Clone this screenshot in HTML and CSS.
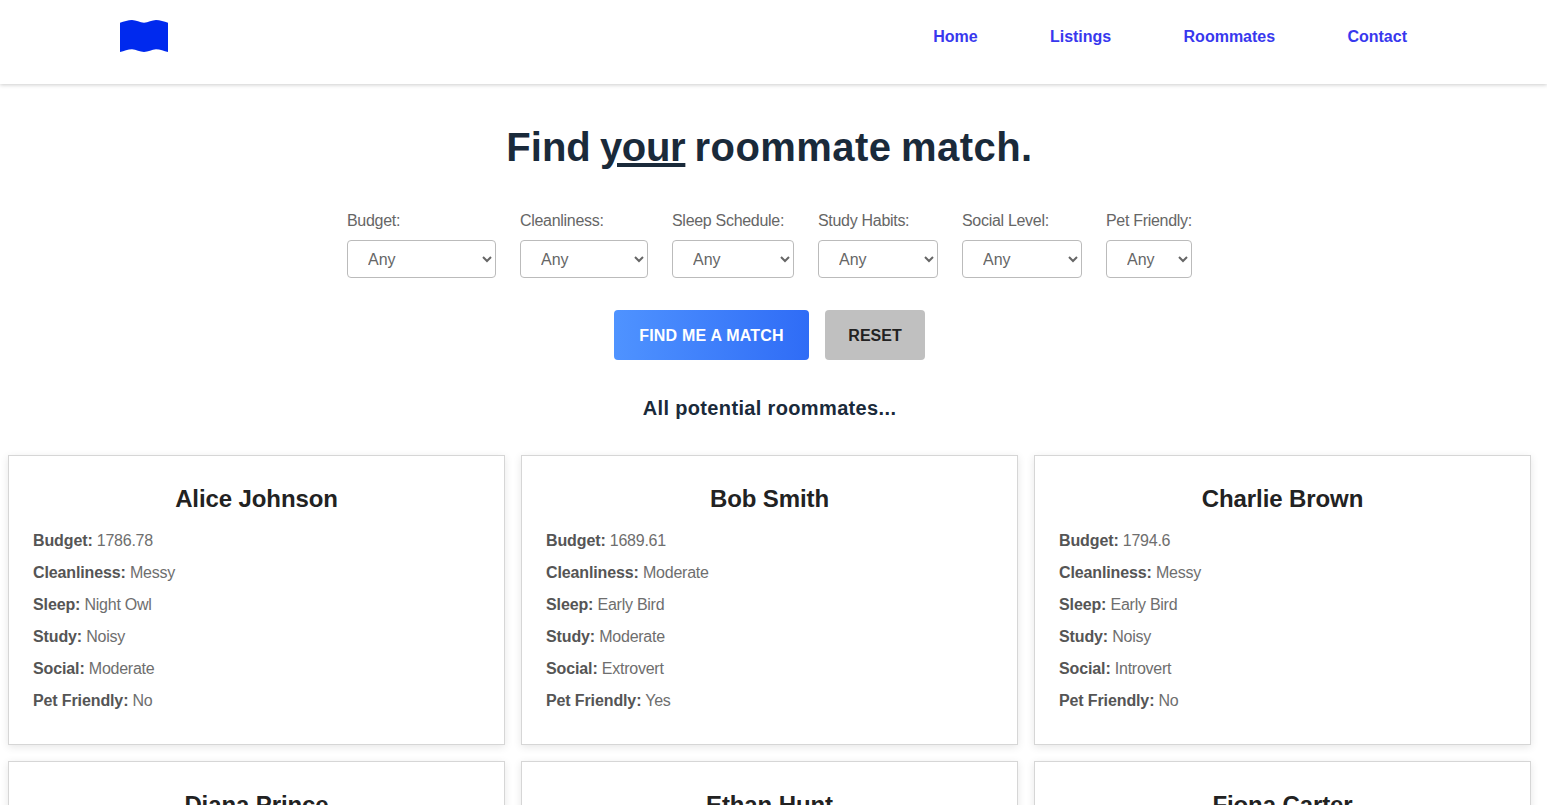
FILE: index.html
```html
<!DOCTYPE html>
<html lang="en">

<head>
    <meta charset="UTF-8">
    <meta name="viewport" content="width=device-width, initial-scale=1.0">
    <title>Find your roommate match</title>
    <link rel="stylesheet" href="styles.css">
</head>

<body>
    <header class="site-header">
        <a class="logo" href="#">
            <svg width="48" height="32" viewBox="0 0 48 32">
                <path fill="#0029ee" d="M0 2.7C4 1.6 8 0 12 0s8 2.700 12 2.700S32 0 36 0s8 1.600 12 2.700V32c-4-1-8-2.800-12-2.800S28 32 24 32s-8-2.800-12-2.800S4 31 0 32z" />
            </svg>
        </a>
        <nav class="site-nav">
            <a href="#">Home</a>
            <a href="#">Listings</a>
            <a href="#">Roommates</a>
            <a href="#">Contact</a>
        </nav>
    </header>

    <main class="content">
        <h1>Find <u>your</u> <span class="title-end">roommate match.</span></h1>

        <form class="filters">
            <div class="filter">
                <label for="budget">Budget:</label>
                <select id="budget" class="select-budget"><option>Any</option></select>
            </div>
            <div class="filter">
                <label for="cleanliness">Cleanliness:</label>
                <select id="cleanliness" class="select-cleanliness"><option>Any</option></select>
            </div>
            <div class="filter">
                <label for="sleep">Sleep Schedule:</label>
                <select id="sleep" class="select-sleep"><option>Any</option></select>
            </div>
            <div class="filter">
                <label for="study">Study Habits:</label>
                <select id="study" class="select-study"><option>Any</option></select>
            </div>
            <div class="filter">
                <label for="social">Social Level:</label>
                <select id="social" class="select-social"><option>Any</option></select>
            </div>
            <div class="filter">
                <label for="pet">Pet Friendly:</label>
                <select id="pet" class="select-pet"><option>Any</option></select>
            </div>
        </form>

        <div class="actions">
            <button class="btn btn-match" type="button">FIND ME A MATCH</button>
            <button class="btn btn-reset" type="button">RESET</button>
        </div>

        <h2>All potential roommates...</h2>

        <section class="cards">
            <article class="card">
                <h3>Alice Johnson</h3>
                <p><strong>Budget:</strong> 1786.78</p>
                <p><strong>Cleanliness:</strong> Messy</p>
                <p><strong>Sleep:</strong> Night Owl</p>
                <p><strong>Study:</strong> Noisy</p>
                <p><strong>Social:</strong> Moderate</p>
                <p><strong>Pet Friendly:</strong> No</p>
            </article>
            <article class="card">
                <h3>Bob Smith</h3>
                <p><strong>Budget:</strong> 1689.61</p>
                <p><strong>Cleanliness:</strong> Moderate</p>
                <p><strong>Sleep:</strong> Early Bird</p>
                <p><strong>Study:</strong> Moderate</p>
                <p><strong>Social:</strong> Extrovert</p>
                <p><strong>Pet Friendly:</strong> Yes</p>
            </article>
            <article class="card">
                <h3>Charlie Brown</h3>
                <p><strong>Budget:</strong> 1794.6</p>
                <p><strong>Cleanliness:</strong> Messy</p>
                <p><strong>Sleep:</strong> Early Bird</p>
                <p><strong>Study:</strong> Noisy</p>
                <p><strong>Social:</strong> Introvert</p>
                <p><strong>Pet Friendly:</strong> No</p>
            </article>
            <article class="card">
                <h3>Diana Prince</h3>
            </article>
            <article class="card">
                <h3>Ethan Hunt</h3>
            </article>
            <article class="card">
                <h3>Fiona Carter</h3>
            </article>
        </section>
    </main>
</body>

</html>
```

FILE: styles.css
```css
* {
    box-sizing: border-box;
}

html,
body {
    height: 100%;
    overflow: hidden;
}

body {
    margin: 0;
    font-family: "Liberation Sans", Arial, sans-serif;
    font-size: 16px;
    color: #555;
    background-color: #fff;
}

.site-header {
    display: flex;
    align-items: center;
    justify-content: space-between;
    height: 84px;
    padding: 0 120px;
    background-color: #fff;
    box-shadow: 0 1px 4px rgba(0, 0, 0, 0.2);
}

.logo {
    display: flex;
    margin-top: -12px;
}

.site-nav {
    display: flex;
    gap: 72.3px;
    padding-right: 20px;
    margin-top: -10px;
}

.site-nav a {
    color: #3838ee;
    font-weight: bold;
    text-decoration: none;
}

.content {
    padding: 0 16px 0 8px;
}

h1 {
    margin: 38px 0 0;
    font-size: 40px;
    line-height: 50px;
    font-weight: bold;
    word-spacing: -2px;
    text-align: center;
    color: #1a2a3a;
}

h1 u {
    letter-spacing: -0.3px;
}

.title-end {
    letter-spacing: 0.45px;
}

.filters {
    display: flex;
    justify-content: center;
    gap: 24px;
    margin-top: 39px;
}

.filter {
    display: flex;
    flex-direction: column;
    gap: 9px;
}

.filter label {
    line-height: 20px;
    letter-spacing: -0.3px;
    color: #666;
    white-space: nowrap;
}

.filter select {
    height: 38px;
    padding: 0 4px 0 16px;
    font-family: inherit;
    font-size: 16px;
    color: #666;
    background-color: #fff;
    border: 1px solid #bbb;
    border-radius: 4px;
}

.select-budget {
    width: 149px;
}

.select-cleanliness {
    width: 128px;
}

.select-sleep {
    width: 122px;
}

.select-study {
    width: 120px;
}

.select-social {
    width: 120px;
}

.select-pet {
    width: 86px;
}

.actions {
    display: flex;
    justify-content: center;
    gap: 16px;
    margin-top: 32px;
}

.btn {
    height: 50px;
    padding: 2px 0 0;
    font-family: inherit;
    font-size: 16px;
    font-weight: bold;
    border: none;
    border-radius: 4px;
    cursor: pointer;
}

.btn-match {
    width: 195px;
    letter-spacing: 0.2px;
    color: #fff;
    background: linear-gradient(90deg, #4f93ff, #2f6cf6);
}

.btn-reset {
    width: 100px;
    color: #222;
    background-color: #c0c0c0;
}

h2 {
    margin: 36px 0 0;
    font-size: 20px;
    line-height: 24px;
    font-weight: bold;
    letter-spacing: 0.35px;
    text-align: center;
    color: #1a2a3a;
}

.cards {
    display: grid;
    grid-template-columns: repeat(3, 1fr);
    gap: 16px;
    margin-top: 35px;
}

.card {
    height: 290px;
    padding: 25px 24px 24px;
    background-color: #fff;
    border: 1px solid #d6d6d6;
    box-shadow: 0 2px 8px rgba(0, 0, 0, 0.1);
}

.card h3 {
    margin: 0 0 12px;
    font-size: 24px;
    line-height: 36px;
    font-weight: bold;
    letter-spacing: -0.1px;
    text-align: center;
    color: #222;
}

.card p {
    margin: 0 0 8px;
    line-height: 24px;
    letter-spacing: -0.25px;
    color: #6e6e6e;
}

.card strong {
    letter-spacing: -0.12px;
    color: #555;
}
```
